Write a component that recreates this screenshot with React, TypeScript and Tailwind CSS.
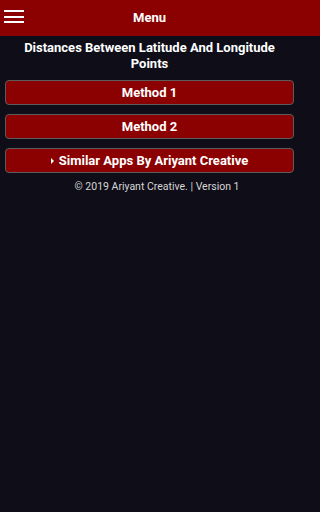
export default function App() {
  const btn =
    "flex h-[25px] w-full items-center justify-center rounded-[4px] border border-[#5c5c5c] bg-[#8b0000] text-[13px] font-bold text-white";

  return (
    <main
      className="min-h-[512px] w-full bg-[#0e0d18]"
      style={{ fontFamily: "Roboto, 'Liberation Sans', sans-serif" }}
    >
      {/* Top bar */}
      <header className="w-full bg-[#8b0000]">
        <div className="relative flex h-9 w-[299px] items-center justify-center">
          <button
            type="button"
            className="absolute left-1 top-[10px] flex w-5 flex-col gap-[3.5px]"
          >
            <span className="h-[2px] w-5 bg-white" />
            <span className="h-[2px] w-5 bg-white" />
            <span className="h-[2px] w-5 bg-white" />
          </button>
          <h1 className="text-[13px] font-bold text-white">Menu</h1>
        </div>
      </header>

      <section className="w-[299px] px-[5px] pt-[4px]">
        <p className="px-3 text-center text-[13px] font-bold leading-4 text-white">
          Distances Between Latitude And Longitude Points
        </p>

        <div className="mt-[8px] space-y-[9px]">
          <button type="button" className={btn}>
            Method 1
          </button>
          <button type="button" className={btn}>
            Method 2
          </button>
          <button type="button" className={btn}>
            <span className="mr-[5px] h-0 w-0 border-y-[3px] border-l-[3px] border-y-transparent border-l-white" />
            Similar Apps By Ariyant Creative
          </button>
        </div>

        <p className="mt-[7px] pl-[15px] text-center text-[10.5px] leading-[14px] text-[#d6d6d6]">
          © 2019 Ariyant Creative. | Version 1
        </p>
      </section>
    </main>
  );
}
